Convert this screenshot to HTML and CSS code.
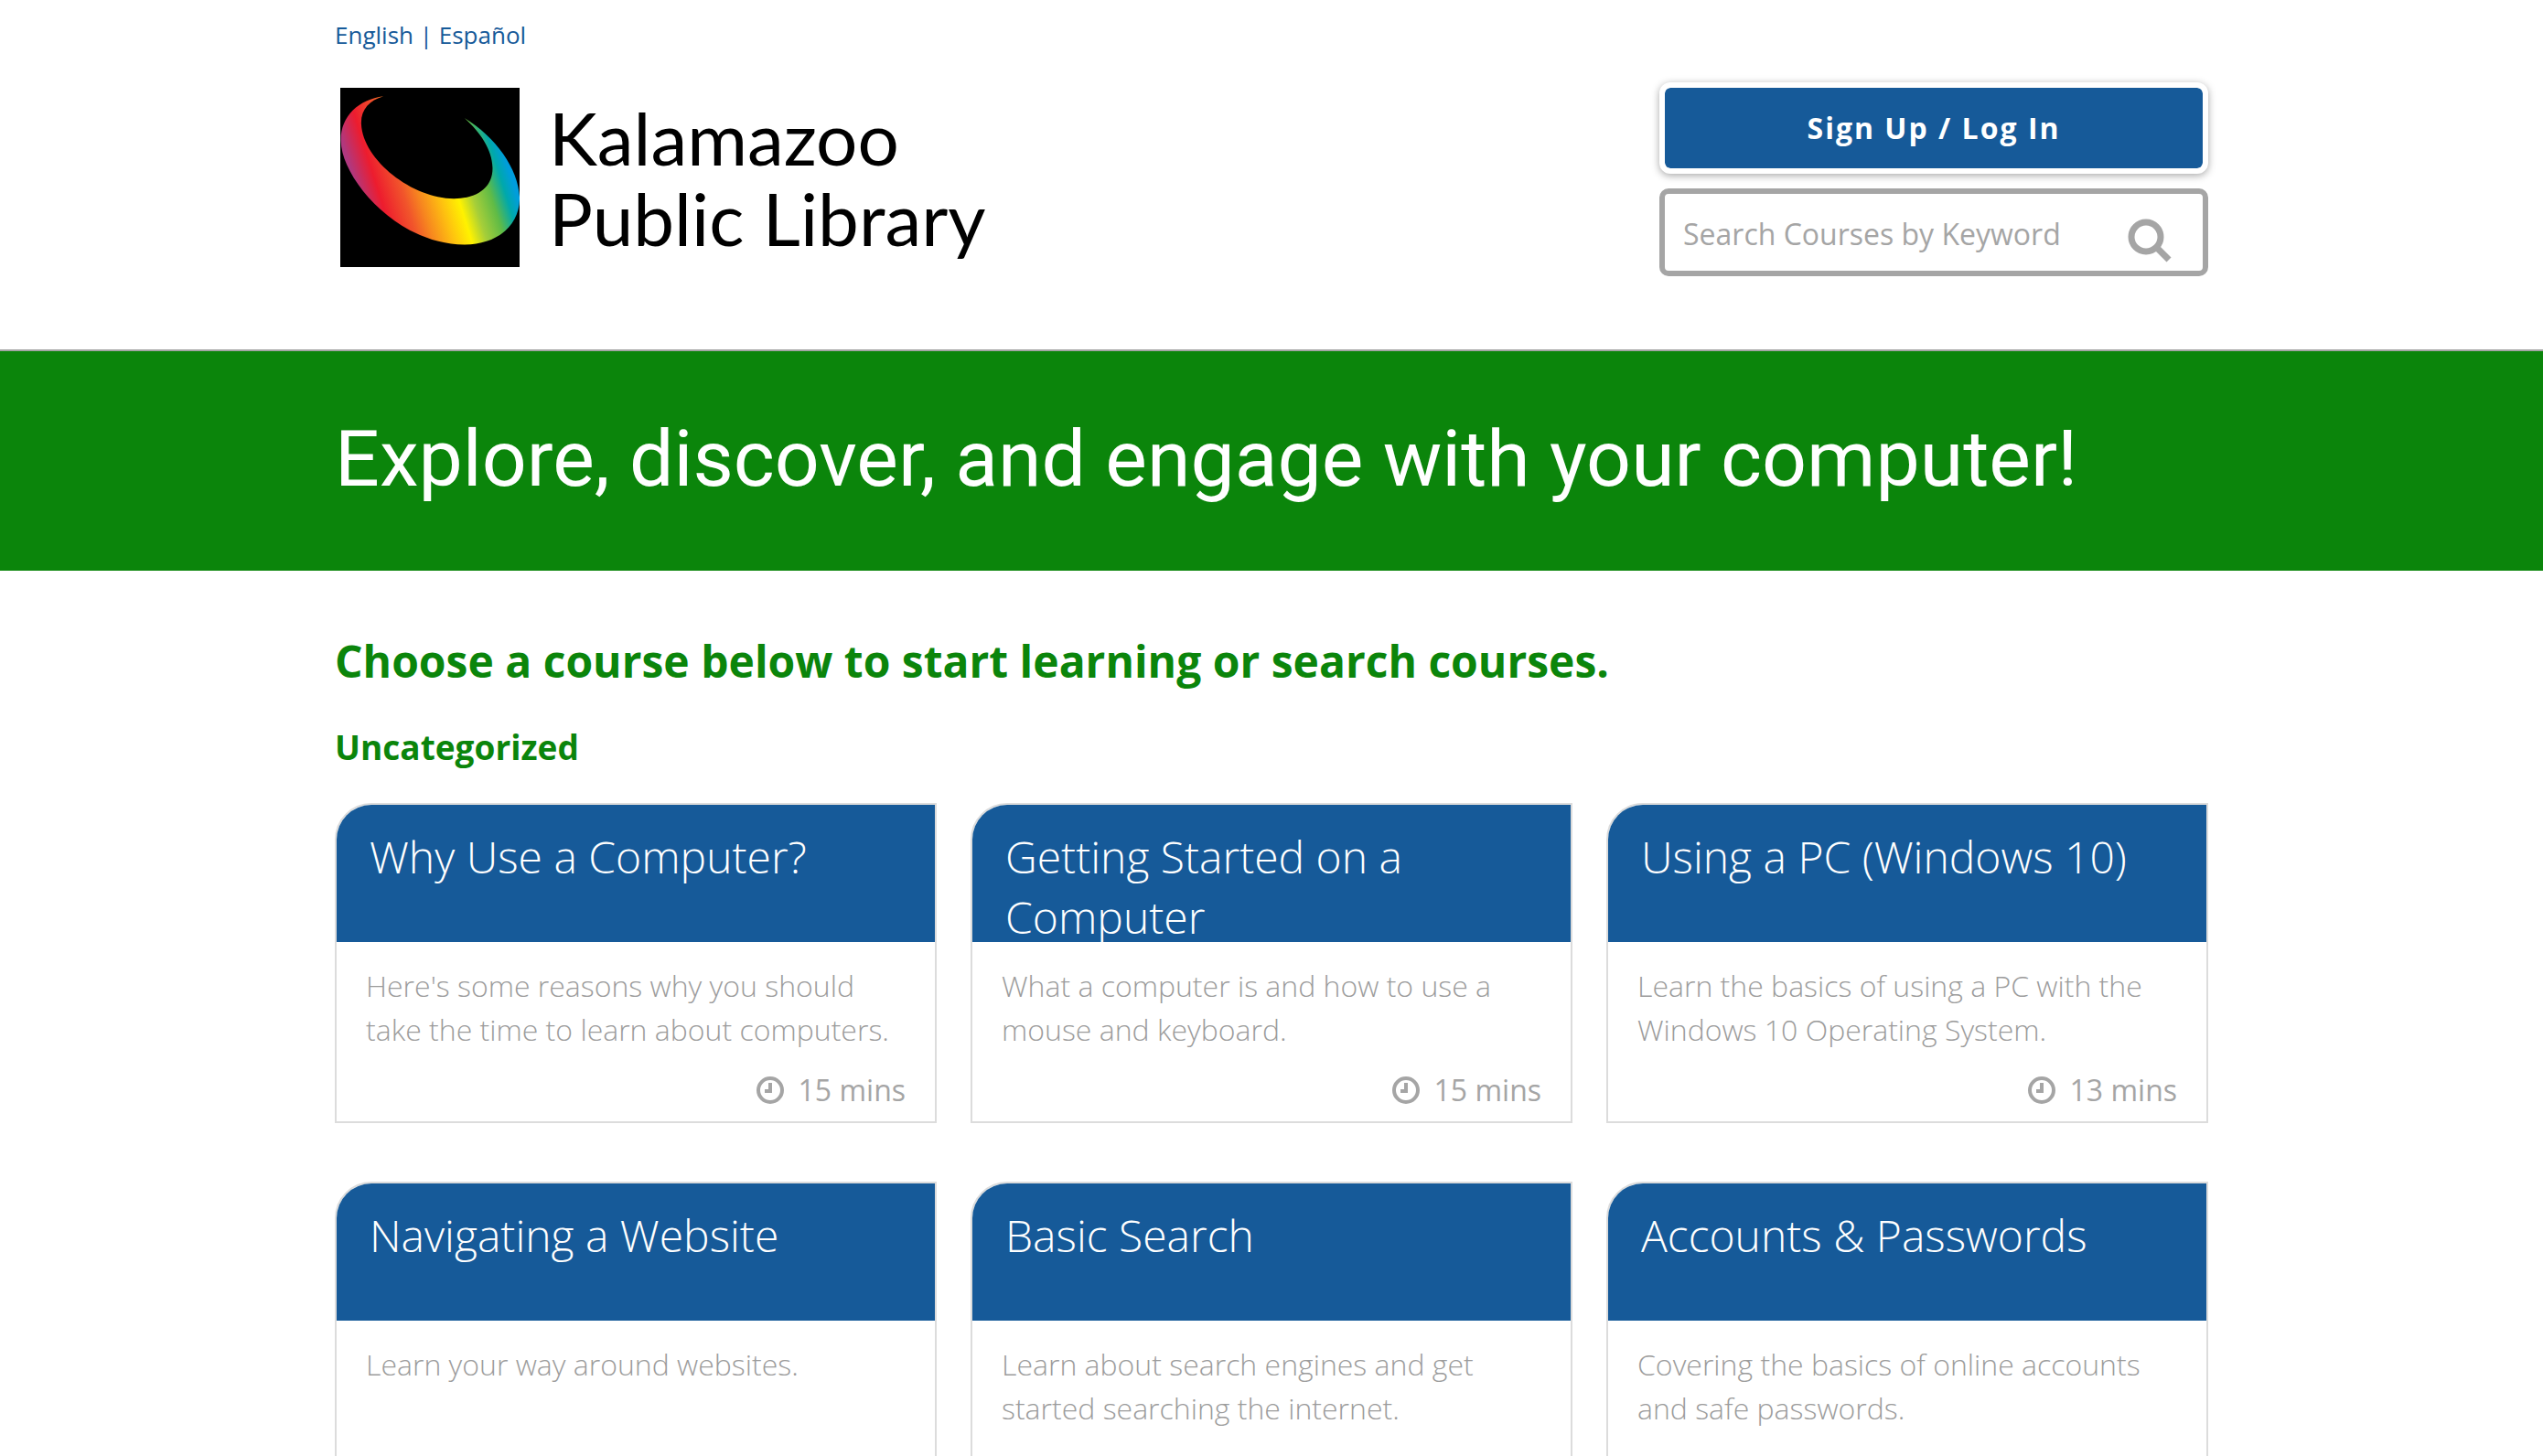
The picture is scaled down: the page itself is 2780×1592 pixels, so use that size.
FILE: index.html
```html
<!DOCTYPE html>
<html lang="en">
<head>
<meta charset="utf-8">
<meta name="viewport" content="width=device-width, initial-scale=1">
<title>Kalamazoo Public Library - Courses</title>
<link rel="stylesheet" href="styles.css">
</head>
<body>
<svg class="sprite" aria-hidden="true">
  <symbol id="clock" viewBox="0 0 30 30">
    <circle cx="15" cy="15" r="13" fill="none" stroke="currentColor" stroke-width="4"/>
    <path d="M15 7v9H9" fill="none" stroke="currentColor" stroke-width="4"/>
  </symbol>
</svg>

<header class="site-header">
  <div class="container">
    <nav class="languages" aria-label="Language"><a href="#">English</a> | <a href="#">Español</a></nav>
    <div class="masthead">
      <a class="brand" href="#">
        <svg class="brand-mark" viewBox="0 0 590 590" aria-hidden="true">
          <defs>
            <linearGradient id="rainbow" gradientUnits="userSpaceOnUse" x1="-60" y1="0" x2="442" y2="-156">
              <stop offset=".02" stop-color="#b0387f"/>
              <stop offset=".145" stop-color="#ed1c2e"/>
              <stop offset=".29" stop-color="#f1552b"/>
              <stop offset=".38" stop-color="#f7871f"/>
              <stop offset=".5" stop-color="#fec010"/>
              <stop offset=".61" stop-color="#fff200"/>
              <stop offset=".7" stop-color="#a6ce39"/>
              <stop offset=".81" stop-color="#60bb46"/>
              <stop offset=".9" stop-color="#00a8ab"/>
              <stop offset=".965" stop-color="#009ddc"/>
            </linearGradient>
          </defs>
          <rect width="590" height="590"/>
          <path fill="url(#rainbow)" d="M142 28C60 38 0 95 2 175C4 300 190 516 408 516C520 516 592 450 590 360C586 265 510 160 408 99C460 145 500 205 501 262C503 325 455 364 375 365C240 366 75 240 69 120C67 72 95 42 142 28Z"/>
        </svg>
        <span class="brand-name">Kalamazoo<br>Public Library</span>
      </a>
      <div class="actions">
        <button class="login" type="button">Sign Up / Log In</button>
        <form class="search" role="search">
          <input class="search-input" type="text" placeholder="Search Courses by Keyword" aria-label="Search Courses by Keyword">
          <button class="search-button" type="button" aria-label="Search">
            <svg viewBox="0 0 48 48" aria-hidden="true">
              <circle cx="20" cy="20" r="16" fill="none" stroke="currentColor" stroke-width="7"/>
              <path d="M31 31L45 45" stroke="currentColor" stroke-width="7"/>
            </svg>
          </button>
        </form>
      </div>
    </div>
  </div>
</header>

<section class="hero">
  <div class="container">
    <h1 class="hero-title">Explore, discover, and engage with your computer!</h1>
  </div>
</section>

<main class="container courses">
  <h2 class="courses-title">Choose a course below to start learning or search courses.</h2>
  <h3 class="category">Uncategorized</h3>
  <div class="grid">
    <article class="card">
      <h4 class="card-title">Why Use a Computer?</h4>
      <p class="card-text">Here's some reasons why you should take the time to learn about computers.</p>
      <p class="card-time"><svg class="clock" aria-hidden="true"><use href="#clock"/></svg>15 mins</p>
    </article>
    <article class="card">
      <h4 class="card-title">Getting Started on a Computer</h4>
      <p class="card-text">What a computer is and how to use a mouse and keyboard.</p>
      <p class="card-time"><svg class="clock" aria-hidden="true"><use href="#clock"/></svg>15 mins</p>
    </article>
    <article class="card">
      <h4 class="card-title">Using a PC (Windows 10)</h4>
      <p class="card-text">Learn the basics of using a PC with the Windows 10 Operating System.</p>
      <p class="card-time"><svg class="clock" aria-hidden="true"><use href="#clock"/></svg>13 mins</p>
    </article>
    <article class="card">
      <h4 class="card-title">Navigating a Website</h4>
      <p class="card-text">Learn your way around websites.</p>
    </article>
    <article class="card">
      <h4 class="card-title">Basic Search</h4>
      <p class="card-text">Learn about search engines and get started searching the internet.</p>
    </article>
    <article class="card">
      <h4 class="card-title">Accounts &amp; Passwords</h4>
      <p class="card-text">Covering the basics of online accounts and safe passwords.</p>
    </article>
  </div>
</main>
</body>
</html>
```
FILE: styles.css
```css
:root {
  --blue: #165a99;
  --green: #0b850b;
  --gray: #a5a5a5;
  --text: #9c9c9c;
  --line: #dcdcdc;
}

* {
  box-sizing: border-box;
}

html {
  overflow: hidden auto;
  scrollbar-width: none;
}

body {
  margin: 0;
  background: #fff;
  color: var(--text);
  font-family: "Open Sans", sans-serif;
}

h1, h2, h3, h4, p {
  margin: 0;
}

.sprite {
  display: none;
}

.container {
  width: 100%;
  max-width: 2048px;
  margin: 0 auto;
}

.site-header {
  padding: 20px 0 80px;
  border-bottom: 2px solid var(--gray);
}

.languages {
  color: var(--blue);
  font-size: 26px;
  line-height: 36px;
}

.languages a {
  color: inherit;
  text-decoration: none;
}

.masthead {
  display: flex;
  justify-content: space-between;
  align-items: flex-start;
  padding-top: 34px;
}

.brand {
  display: flex;
  gap: 32px;
  padding: 6px;
  color: #000;
  text-decoration: none;
}

.brand-mark {
  width: 196px;
  height: 196px;
}

.brand-name {
  padding-top: 10px;
  font-family: Lato, sans-serif;
  font-size: 80px;
  line-height: 88px;
  white-space: nowrap;
}

.actions {
  display: flex;
  flex-direction: column;
  gap: 16px;
  width: 600px;
}

.login {
  height: 100px;
  border: 6px solid #fff;
  border-radius: 12px;
  background: var(--blue);
  background-clip: padding-box;
  box-shadow: 0 2px 8px rgba(0, 0, 0, .35);
  color: #fff;
  font: 700 32px/44px "Open Sans", sans-serif;
  letter-spacing: 2px;
}

.search {
  display: flex;
  height: 96px;
  padding-left: 20px;
  border: 6px solid var(--gray);
  border-radius: 10px;
}

.search-input {
  width: 412px;
  padding: 4px 0 0;
  border: 0;
  outline: 0;
  background: none;
  color: var(--text);
  font: 400 32px/44px "Open Sans", sans-serif;
}

.search-input::placeholder {
  color: var(--gray);
  opacity: 1;
}

.search-button {
  margin-left: auto;
  padding: 18px 34px 0 0;
  border: 0;
  background: none;
  color: var(--gray);
}

.search-button svg {
  display: block;
  width: 48px;
  height: 48px;
}

.hero {
  padding: 66px 0 70px;
  background: var(--green);
}

.hero-title {
  color: #fff;
  font: 400 86px/104px Roboto, sans-serif;
}

.courses {
  padding: 66px 0 64px;
}

.courses-title {
  color: var(--green);
  font-size: 48px;
  line-height: 66px;
}

.category {
  margin: 34px 0;
  color: var(--green);
  font-size: 37px;
  line-height: 54px;
}

.grid {
  display: grid;
  grid-template-columns: repeat(3, 1fr);
  gap: 64px 37px;
}

.card {
  display: flex;
  flex-direction: column;
  min-height: 350px;
  border: 2px solid var(--line);
  border-top-left-radius: 40px;
  overflow: hidden;
}

.card-title {
  height: 150px;
  padding: 24px 36px 0;
  overflow: hidden;
  background: var(--blue);
  color: #fff;
  font-size: 48px;
  font-weight: 300;
  line-height: 66px;
}

.card-text {
  padding: 24px 32px 0;
  font-size: 32px;
  font-weight: 300;
  line-height: 48px;
}

.card-time {
  display: flex;
  justify-content: flex-end;
  align-items: center;
  gap: 16px;
  margin-top: auto;
  padding: 0 32px 10px;
  color: var(--gray);
  font-size: 32px;
  line-height: 48px;
}

.clock {
  width: 30px;
  height: 30px;
}
```
